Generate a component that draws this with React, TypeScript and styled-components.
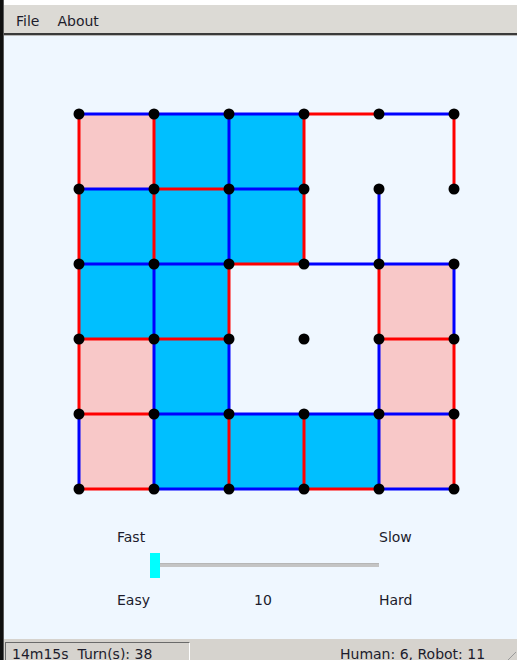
import React from "react";
import styled, { createGlobalStyle } from "styled-components";

const GlobalStyle = createGlobalStyle`
  html, body { margin: 0; padding: 0; background: #eff7ff; }
  body { font-family: "DejaVu Sans", Verdana, sans-serif; }
`;

type E = "b" | "r" | "-";
type C = "p" | "b" | "-";

const H: E[][] = [
  ["b", "b", "b", "r", "b"],
  ["b", "r", "b", "-", "-"],
  ["b", "b", "r", "b", "b"],
  ["r", "r", "-", "-", "r"],
  ["r", "b", "b", "b", "b"],
  ["r", "b", "b", "r", "b"],
];

const V: E[][] = [
  ["r", "r", "b", "r", "-", "r"],
  ["r", "r", "b", "r", "b", "-"],
  ["r", "b", "r", "-", "r", "b"],
  ["r", "b", "b", "-", "b", "r"],
  ["b", "b", "r", "r", "b", "r"],
];

const CELLS: C[][] = [
  ["p", "b", "b", "-", "-"],
  ["b", "b", "b", "-", "-"],
  ["b", "b", "-", "-", "p"],
  ["p", "b", "-", "-", "p"],
  ["p", "b", "b", "b", "p"],
];

const STEP = 75;
const OFF = 15;
const pos = (i: number) => OFF + i * STEP;
const lineColor = (e: E) => (e === "r" ? "#ff0000" : "#0000ff");
const cellColor = (c: C) => (c === "p" ? "#f8c8c8" : "#00bfff");

const Screen = styled.div`
  display: flex;
  width: 517px;
  height: 660px;
  overflow: hidden;
`;

const BackStrip = styled.div`
  width: 4px;
  flex: none;
  background: #101010;
  border-right: 1px solid #5a5a5a;
  box-sizing: border-box;
`;

const Window = styled.div`
  flex: 1;
  display: flex;
  flex-direction: column;
  min-width: 0;
`;

const TopEdge = styled.div`
  height: 5px;
  background: #ffffff;
  flex: none;
`;

const MenuBar = styled.div`
  height: 30px;
  flex: none;
  display: flex;
  align-items: center;
  padding: 4px 0 0 3px;
  box-sizing: border-box;
  background: #dcdad5;
  border-bottom: 2px solid #3a3a3a;
  box-shadow: 0 1px 0 #b8b8b8;
`;

const MenuItem = styled.span`
  font-size: 14px;
  color: #1c1c2c;
  padding: 0 9px;
`;

const Content = styled.div`
  flex: 1;
  display: flex;
  flex-direction: column;
  align-items: flex-start;
  background: #eff7ff;
  margin-top: 1px;
`;

const BoardSvg = styled.svg`
  display: block;
  margin: 63px 0 0 60px;
`;

const Controls = styled.div`
  margin: 25px 0 0 113px;
  width: 320px;
  font-size: 14px;
  color: #1c1c2c;
`;

const LabelRow = styled.div<{ $cols: string }>`
  display: grid;
  grid-template-columns: ${(p) => p.$cols};
  line-height: 17px;
`;

const SliderRow = styled.div`
  position: relative;
  height: 25px;
  margin: 7px 0 14px 0;
`;

const Track = styled.div`
  position: absolute;
  left: 38px;
  top: 10px;
  width: 224px;
  height: 4px;
  background: #c4c4c4;
  border-top: 1px solid #b6b6b6;
  box-sizing: border-box;
`;

const Thumb = styled.div`
  position: absolute;
  left: 33px;
  top: 0;
  width: 10px;
  height: 25px;
  background: #00ffff;
`;

const StatusBar = styled.div`
  height: 21px;
  flex: none;
  display: flex;
  align-items: flex-start;
  padding: 3px 0 0 1px;
  box-sizing: border-box;
  background: #d6d3ce;
  font-size: 14px;
  color: #1c1c2c;
  white-space: pre;
  position: relative;
`;

const StatusPanel = styled.div`
  width: 185px;
  height: 22px;
  box-sizing: border-box;
  border-top: 1px solid #6a6a6a;
  border-left: 1px solid #6a6a6a;
  border-right: 1px solid #ffffff;
  padding: 3px 0 0 6px;
  line-height: 17px;
`;

const StatusRight = styled.div`
  margin-left: 150px;
  padding-top: 4px;
  line-height: 17px;
`;

const Grip = styled.svg`
  position: absolute;
  right: 1px;
  bottom: 0;
`;

function Board() {
  const size = OFF * 2 + STEP * 5;
  return (
    <BoardSvg width={size} height={size} viewBox={`0 0 ${size} ${size}`}>
      {CELLS.map((row, r) =>
        row.map((c, ci) =>
          c === "-" ? null : (
            <rect
              key={`c${r}-${ci}`}
              x={pos(ci)}
              y={pos(r)}
              width={STEP}
              height={STEP}
              fill={cellColor(c)}
            />
          )
        )
      )}
      {H.map((row, r) =>
        row.map((e, c) =>
          e === "-" ? null : (
            <line
              key={`h${r}-${c}`}
              x1={pos(c)}
              y1={pos(r)}
              x2={pos(c + 1)}
              y2={pos(r)}
              stroke={lineColor(e)}
              strokeWidth={3}
            />
          )
        )
      )}
      {V.map((row, r) =>
        row.map((e, c) =>
          e === "-" ? null : (
            <line
              key={`v${r}-${c}`}
              x1={pos(c)}
              y1={pos(r)}
              x2={pos(c)}
              y2={pos(r + 1)}
              stroke={lineColor(e)}
              strokeWidth={3}
            />
          )
        )
      )}
      {Array.from({ length: 6 }).map((_, r) =>
        Array.from({ length: 6 }).map((__, c) => (
          <circle key={`d${r}-${c}`} cx={pos(c)} cy={pos(r)} r={5.5} fill="#000" />
        ))
      )}
    </BoardSvg>
  );
}

export default function App() {
  return (
    <>
      <GlobalStyle />
      <Screen>
        <BackStrip />
        <Window>
          <TopEdge />
          <MenuBar>
            <MenuItem>File</MenuItem>
            <MenuItem>About</MenuItem>
          </MenuBar>
          <Content>
            <Board />
            <Controls>
              <LabelRow $cols="262px auto">
                <span>Fast</span>
                <span>Slow</span>
              </LabelRow>
              <SliderRow>
                <Track />
                <Thumb />
              </SliderRow>
              <LabelRow $cols="137px 125px auto">
                <span>Easy</span>
                <span>10</span>
                <span>Hard</span>
              </LabelRow>
            </Controls>
          </Content>
          <StatusBar>
            <StatusPanel>{"14m15s  Turn(s): 38"}</StatusPanel>
            <StatusRight>Human: 6, Robot: 11</StatusRight>
            <Grip width="10" height="10" viewBox="0 0 10 10">
              <line x1="2" y1="10" x2="10" y2="2" stroke="#9a9a9a" strokeWidth="1" />
            </Grip>
          </StatusBar>
        </Window>
      </Screen>
    </>
  );
}
